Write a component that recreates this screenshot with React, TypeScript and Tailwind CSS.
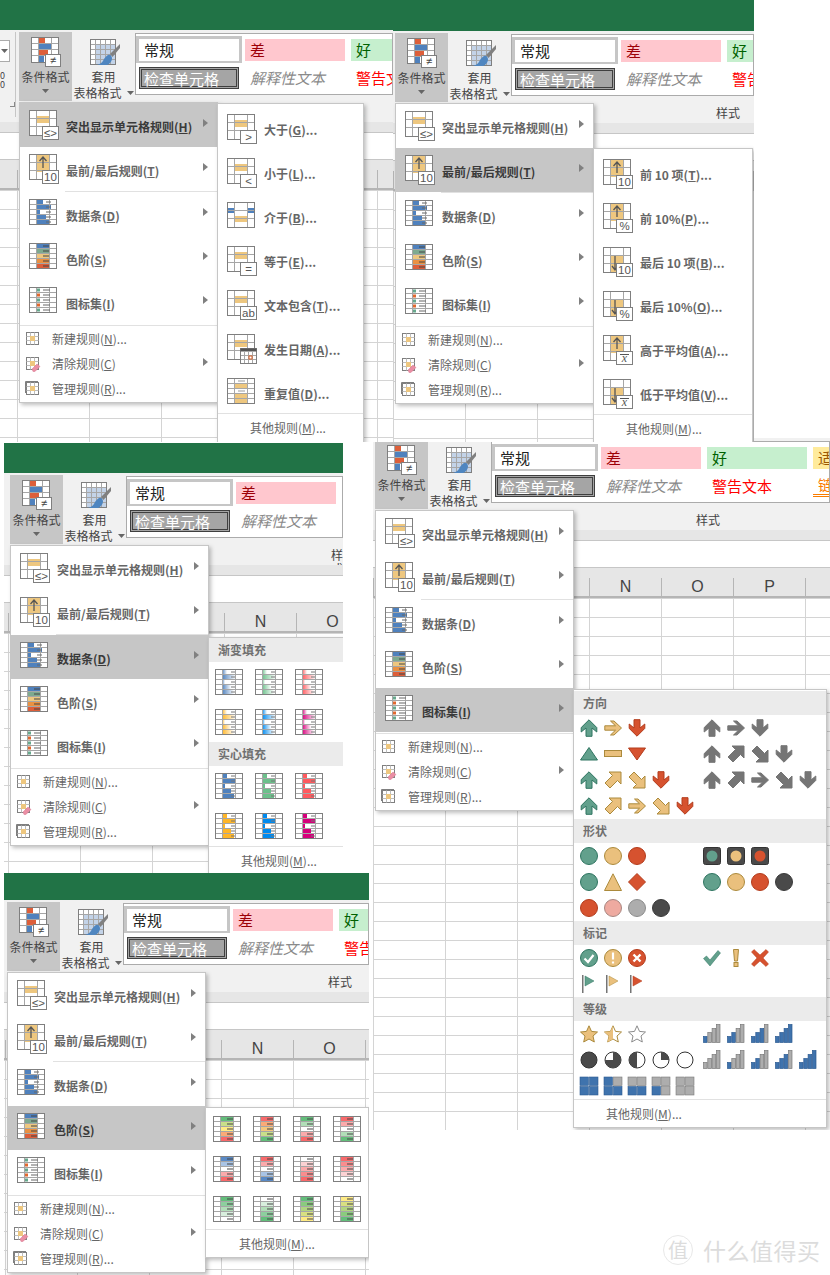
import type { ReactNode } from "react";

const FRAME = "#7f7f7f";
const LINE = "#a6a6a6";
const YEL = "#eec77f";
const BLUE = "#4f81bd";
const RED = "#dd5f3a";
const FONT = "font-['Noto_Sans_CJK_SC','Noto_Sans',sans-serif]";

// ---- sheet icons ----
function Sheet({ w = 31, h = 30, rows = 5, back, over }: { w?: number; h?: number; rows?: 3 | 5; back?: ReactNode; over?: ReactNode }) {
    const ys = rows === 3 ? [8.5, 16.5] : [5.5, 10.5, 15.5, 20.5];
    return (
        <svg width={w} height={h} viewBox={`0 0 ${w} ${h}`} className="shrink-0">
            <rect x="0.5" y="0.5" width="27" height="25" fill="#fff" />
            {back}
            {ys.map((y) => <line key={y} x1="1" x2="27" y1={y} y2={y} stroke={LINE} />)}
            <line x1="7.5" x2="7.5" y1="1" y2="25" stroke={LINE} />
            <line x1="20.5" x2="20.5" y1="1" y2="25" stroke={LINE} />
            <rect x="0.5" y="0.5" width="27" height="25" fill="none" stroke={FRAME} />
            {over}
        </svg>
    );
}

function Badge({ label, italic }: { label: string; italic?: boolean }) {
    return (
        <g>
            <rect x="13.5" y="16.5" width="16" height="13" fill="#fff" stroke={FRAME} />
            <text x="21.5" y="27" textAnchor="middle" fontSize={italic ? 12 : 11.5} fontStyle={italic ? "italic" : "normal"} fontFamily={italic ? "Liberation Serif" : "Liberation Sans"} fill="#555">{label}</text>
            {italic ? <line x1="17" x2="26" y1="19.5" y2="19.5" stroke="#555" /> : null}
        </g>
    );
}

const midBar = <rect x="8" y="6" width="12" height="7" fill={YEL} />;

function TopIcon({ label, italic }: { label: string; italic?: boolean }) {
    return <Sheet rows={3} back={<rect x="8" y="1" width="12" height="17" fill={YEL} />}
        over={<><path d="M14 14V3M10.5 7L14 3l3.500 4" fill="none" stroke="#555" strokeWidth="1.300" /><Badge label={label} italic={italic} /></>} />;
}

function BottomIcon({ label, italic }: { label: string; italic?: boolean }) {
    return <Sheet rows={3} back={<rect x="8" y="9" width="12" height="16" fill={YEL} />}
        over={<><path d="M12 9V23M9 19l3 4 3-4" fill="none" stroke="#555" strokeWidth="1.300" /><Badge label={label} italic={italic} /></>} />;
}

function BarsIcon() {
    const ws = [6, 14, 3, 9, 13];
    return <Sheet rows={5}
        back={ws.map((w, i) => <rect key={i} x="8" y={1 + i * 5} width={w} height="4" fill={BLUE} />)}
        over={[0, 1, 2, 3, 4].map((i) => <line key={i} x1="17" x2="22" y1={3 + i * 5} y2={3 + i * 5} stroke="#666" />)} />;
}

function ScaleIcon() {
    const cs = [BLUE, "#7eaa8f", YEL, "#ea9142", RED];
    return <Sheet rows={5}
        back={cs.map((c, i) => <rect key={c} x="8" y={1 + i * 5} width="12" height="4" fill={c} />)}
        over={[0, 1, 2, 3, 4].map((i) => <line key={i} x1="14" x2="20" y1={3 + i * 5} y2={3 + i * 5} stroke="#444" />)} />;
}

function SetIcon() {
    const cs = ["#66a88c", "#e0682f", "#66a88c", "#e0682f", "#66a88c"];
    return <Sheet rows={5}
        over={cs.map((c, i) => <g key={i}><rect x="8" y={1.5 + i * 5} width="3" height="3" fill={c} /><line x1="14" x2="21" y1={3 + i * 5} y2={3 + i * 5} stroke="#666" /></g>)} />;
}

function SmallIcon({ kind }: { kind: "new" | "clear" | "manage" }) {
    return (
        <svg width="16" height="16" viewBox="0 0 16 16" className="shrink-0">
            {kind === "manage" ? <path d="M0.500 12V0.500H13" fill="none" stroke={FRAME} /> : null}
            <rect x="1.500" y="1.500" width="12" height="12" fill="#fff" stroke={FRAME} />
            <path d="M1.500 5.500H13.500M1.500 9.500H13.500M5.500 1.500V13.500M9.500 1.500V13.500" stroke="#bdbdbd" />
            <rect x="5" y="5" width="5" height="5" fill={YEL} />
            {kind === "clear" ? <path d="M7 13l5-5 3 2.500-5 5H8z" fill="#ea8ea4" stroke="#d97a92" strokeWidth="0.500" /> : null}
        </svg>
    );
}

function CondFormatIcon() {
    return (
        <svg width="31" height="30" viewBox="0 0 31 30">
            <rect x="0.500" y="0.500" width="27" height="25" fill="#fff" />
            <rect x="8" y="1" width="6" height="5" fill={RED} />
            <rect x="8" y="7" width="12" height="5" fill={BLUE} />
            <rect x="8" y="13" width="9" height="5" fill={RED} />
            <rect x="8" y="19" width="5" height="6" fill={BLUE} />
            <path d="M1 6.500H27M1 12.500H27M1 18.500H27M7.500 1V25M20.500 1V25" stroke={LINE} />
            <rect x="0.500" y="0.500" width="27" height="25" fill="none" stroke={FRAME} />
            <rect x="14.500" y="17.500" width="15" height="12" fill="#fff" stroke={FRAME} />
            <text x="22" y="27" textAnchor="middle" fontSize="11" fontFamily="Liberation Sans" fill="#444">≠</text>
        </svg>
    );
}

function TableStyleIcon() {
    return (
        <svg width="31" height="30" viewBox="0 0 31 30">
            <rect x="0.500" y="0.500" width="25" height="25" fill="#fff" />
            <rect x="6" y="6" width="19" height="19" fill="#c3d3e8" />
            <path d="M1 5.500H25M1 10.500H25M1 15.500H25M1 20.500H25M5.500 1V25M10.500 1V25M15.500 1V25M20.500 1V25" stroke={LINE} />
            <rect x="0.500" y="0.500" width="25" height="25" fill="none" stroke={FRAME} />
            <path d="M30 5L20 15l2.500 3L30 9z" fill="#808080" />
            <path d="M18 16c2-1 4 1 4 3.500 0 3-3 6-5 6.500H7c3-1 5-2 6.500-5 1-2 2.500-4 4.500-5z" fill="#4f86c0" />
        </svg>
    );
}

// ---- sub menu sheets ----
function DataBarIcon({ color, gradient }: { color: string; gradient?: boolean }) {
    const ws = [5, 14, 3, 9, 12];
    const id = `bar${color.slice(1)}`;
    return <Sheet w={28} h={26} rows={5}
        back={<>
            <defs><linearGradient id={id}><stop offset="0" stopColor={color} /><stop offset="1" stopColor="#fff" /></linearGradient></defs>
            {ws.map((w, i) => <rect key={i} x="7" y={1 + i * 5} width={w} height="4" fill={gradient ? `url(#${id})` : color} />)}
        </>}
        over={[0, 1, 2, 3, 4].map((i) => <line key={i} x1="16" x2="20" y1={3 + i * 5} y2={3 + i * 5} stroke="#777" />)} />;
}

function ScaleSheet({ colors }: { colors: string[] }) {
    return <Sheet w={28} h={26} rows={5}
        back={colors.map((c, i) => <rect key={i} x="7" y={1 + i * 5} width="14" height="4" fill={c} />)}
        over={colors.map((_, i) => <line key={i} x1="14" x2="20" y1={3 + i * 5} y2={3 + i * 5} stroke="#444" />)} />;
}

const G = "#63be7b", R = "#f8696b", W = "#ffffff", Y = "#ffeb84", B = "#5a8ac6";
const scales: string[][] = [
    [G, "#c9df8a", Y, "#fbaa77", R],
    [R, "#fbaa77", "#f5c77e", "#c9df8a", G],
    [G, "#b1deb8", W, "#fbaaab", R],
    [R, "#fbaaab", W, "#b1deb8", G],
    [B, "#a9c4e5", W, "#fbaaab", R],
    [R, "#fbaaab", W, "#a9c4e5", B],
    [W, "#fbd2d3", "#fbaaab", "#f98d8e", R],
    [R, "#f98d8e", "#fbaaab", "#fbd2d3", W],
    [G, "#8dcf9e", "#b1deb8", "#d8eedd", W],
    [W, "#d8eedd", "#b1deb8", "#8dcf9e", G],
    [G, "#8acb7e", "#b1d580", "#d8e082", Y],
    [Y, "#d8e082", "#b1d580", "#8acb7e", G],
];

// ---- icon sets ----
const C: Record<string, [string, string]> = {
    g: ["#62a08c", "#2f7561"],
    y: ["#eac07d", "#ab8a3c"],
    r: ["#d6522f", "#b33c1c"],
    k: ["#757575", "#757575"],
};

function Box({ children }: { children: ReactNode }) {
    return <svg width="18" height="18" viewBox="0 0 18 18" className="shrink-0 overflow-visible">{children}</svg>;
}

function arrow(deg: number, c: string) {
    let d = "M9 .8L16.800 8.600V13L12 9V17.300H6V9L1.200 13V8.600Z";
    let rot = deg;
    if (deg === 90) {
        d = "M17.500 9L10 2H6.500L11.500 6.800H.8V11.200H11.500L6.500 16H10Z";
        rot = 0;
    } else if (deg === 45 || deg === 135) {
        d = "M17 1H5L8.500 4.500 1 12 6 17 13.500 9.500 17 13Z";
        rot = deg - 45;
    }
    return (
        <Box>
            <path transform={`rotate(${rot} 9 9)`} d={d} fill={C[c][0]} stroke={C[c][1]} />
        </Box>
    );
}

function circle(c: string) {
    return <Box><circle cx="9" cy="9" r="8.500" fill={C[c][0]} stroke={C[c][1]} /></Box>;
}

function rawCircle(fill: string, stroke: string) {
    return <Box><circle cx="9" cy="9" r="8.500" fill={fill} stroke={stroke} /></Box>;
}

function light(c: string) {
    return <Box><rect x="0.500" y="0.500" width="17" height="17" rx="2" fill="#4a4a4a" stroke="#333" /><circle cx="9" cy="9" r="5.500" fill={C[c][0]} /></Box>;
}

function flag(c: string) {
    return <Box><rect x="2" y="0" width="1.500" height="18" fill="#757575" /><path d="M5 1l9 5-9 5z" fill={C[c][0]} stroke={C[c][1]} strokeWidth="0.500" /></Box>;
}

const STAR = "9,.8 11.500,6.400 17.500,7 13,11 14.300,17 9,14 3.700,17 5,11 .5,7 6.500,6.400";

function star(kind: "full" | "half" | "none") {
    return (
        <Box>
            <polygon points={STAR} fill={kind === "full" ? "#eac07d" : "#fff"} stroke={kind === "none" ? "#8c8c8c" : "#ab8a3c"} />
            {kind === "half" ? <polygon points="9,.8 9,14 3.700,17 5,11 .5,7 6.500,6.400" fill="#eac07d" /> : null}
        </Box>
    );
}

function harvey(d: string | null, full?: boolean) {
    return (
        <Box>
            <circle cx="9" cy="9" r="8" fill={full ? "#4a4a4a" : "#fff"} stroke="#333" />
            {d ? <path d={d} fill="#4a4a4a" /> : null}
        </Box>
    );
}

function signal(n: number) {
    const hs = [6, 10, 14, 18];
    return (
        <Box>
            {hs.map((h, i) => <rect key={h} x={0.5 + i * 4.300} y={17.500 - h} width="3.600" height={h} fill={i < n ? "#3f73ad" : "#adadad"} stroke={i < n ? "#2c5a91" : "#7a7a7a"} strokeWidth="0.700" />)}
        </Box>
    );
}

function quad(on: boolean[]) {
    const pos = [[0, 0], [9.500, 0], [0, 9.500], [9.500, 9.500]];
    return (
        <Box>
            {pos.map(([x, y], i) => <rect key={i} x={x} y={y} width="8.500" height="8.500" fill={on[i] ? "#3f73ad" : "#adadad"} stroke={on[i] ? "#2c5a91" : "#7a7a7a"} strokeWidth="0.600" />)}
        </Box>
    );
}

const iconRows: { title: string; rows: [ReactNode[], ReactNode[]][] }[] = [
    {
        title: "方向",
        rows: [
            [[arrow(0, "g"), arrow(90, "y"), arrow(180, "r")], [arrow(0, "k"), arrow(90, "k"), arrow(180, "k")]],
            [[
                <Box><path d="M9 2.500L17.500 15H.5z" fill={C.g[0]} stroke={C.g[1]} /></Box>,
                <Box><rect x="0.500" y="5.500" width="17" height="6" fill={C.y[0]} stroke={C.y[1]} /></Box>,
                <Box><path d="M.5 3H17.500L9 15z" fill={C.r[0]} stroke={C.r[1]} /></Box>,
            ], [arrow(0, "k"), arrow(45, "k"), arrow(135, "k"), arrow(180, "k")]],
            [[arrow(0, "g"), arrow(45, "y"), arrow(135, "y"), arrow(180, "r")], [arrow(0, "k"), arrow(45, "k"), arrow(90, "k"), arrow(135, "k"), arrow(180, "k")]],
            [[arrow(0, "g"), arrow(45, "y"), arrow(90, "y"), arrow(135, "y"), arrow(180, "r")], []],
        ],
    },
    {
        title: "形状",
        rows: [
            [[circle("g"), circle("y"), circle("r")], [light("g"), light("y"), light("r")]],
            [[
                circle("g"),
                <Box><path d="M9 .8L17.500 17.500H.5z" fill={C.y[0]} stroke={C.y[1]} /></Box>,
                <Box><path d="M9 .5L17.500 9 9 17.500.5 9z" fill={C.r[0]} stroke={C.r[1]} strokeLinejoin="round" /></Box>,
            ], [circle("g"), circle("y"), circle("r"), rawCircle("#4a4a4a", "#3a3a3a")]],
            [[circle("r"), rawCircle("#eeaaa0", "#a88680"), rawCircle("#adadad", "#8c8c8c"), rawCircle("#4a4a4a", "#3a3a3a")], []],
        ],
    },
    {
        title: "标记",
        rows: [
            [[
                <Box><circle cx="9" cy="9" r="8.500" fill={C.g[0]} stroke={C.g[1]} /><path d="M4.500 9.500L8 13l5.500-7" fill="none" stroke="#fff" strokeWidth="2.200" /></Box>,
                <Box><circle cx="9" cy="9" r="8.500" fill={C.y[0]} stroke={C.y[1]} /><path d="M9 3.500V10.500M9 12.500V14.500" fill="none" stroke="#fff" strokeWidth="2.200" /></Box>,
                <Box><circle cx="9" cy="9" r="8.500" fill={C.r[0]} stroke={C.r[1]} /><path d="M5.500 5.500L12.500 12.500M12.500 5.500L5.500 12.500" fill="none" stroke="#fff" strokeWidth="2.400" /></Box>,
            ], [
                <Box><path d="M.5 9.500L3.500 7 7 11 15 1.500 17.500 4 7 17z" fill={C.g[0]} stroke={C.g[1]} strokeWidth="0.500" /></Box>,
                <Box><path d="M6.500 .5H11.500L10.500 12H7.500z" fill={C.y[0]} stroke={C.y[1]} /><rect x="7" y="13.500" width="4" height="4" fill={C.y[0]} stroke={C.y[1]} /></Box>,
                <Box><path d="M3 .5L9 6 15 .5 17.500 3 12 9 17.500 15 15 17.500 9 12 3 17.500.5 15 6 9 .5 3z" fill={C.r[0]} stroke={C.r[1]} strokeWidth="0.500" /></Box>,
            ]],
            [[flag("g"), flag("y"), flag("r")], []],
        ],
    },
    {
        title: "等级",
        rows: [
            [[star("full"), star("half"), star("none")], [signal(1), signal(2), signal(3), signal(4)]],
            [[
                harvey(null, true),
                harvey("M9 9V1A8 8 0 1 1 1 9z"),
                harvey("M9 1A8 8 0 0 0 9 17z"),
                harvey("M9 9V1A8 8 0 0 1 17 9z"),
                harvey(null),
            ], [signal(0), signal(1), signal(2), signal(3), signal(4)]],
            [[
                quad([true, true, true, true]),
                quad([true, false, true, true]),
                quad([false, false, true, true]),
                quad([false, false, true, false]),
                quad([false, false, false, false]),
            ], []],
        ],
    },
];

// ---- menu parts ----
function Label({ text, k, more, strong }: { text: string; k: string; more?: boolean; strong?: boolean }) {
    return (
        <span className={`text-[12px] leading-none whitespace-nowrap ${strong ? "font-bold" : "font-normal"}`}>
            {text}(<u>{k}</u>){more ? "..." : ""}
        </span>
    );
}

function Caret() {
    return (
        <svg width="5" height="8" viewBox="0 0 5 8" className="ml-auto mr-[9px] shrink-0 -translate-y-[2px]">
            <path d="M0 0l5 4-5 4z" fill="#808080" />
        </svg>
    );
}

const mainRows = [
    { text: "突出显示单元格规则", k: "H", icon: <Sheet rows={3} back={midBar} over={<Badge label="≤>" />} /> },
    { text: "最前/最后规则", k: "T", icon: <TopIcon label="10" /> },
    { text: "数据条", k: "D", icon: <BarsIcon /> },
    { text: "色阶", k: "S", icon: <ScaleIcon /> },
    { text: "图标集", k: "I", icon: <SetIcon /> },
];

function SubRows({ rows }: { rows: { text: string; k: string; icon: ReactNode }[] }) {
    return (
        <div className="pt-[4px]">
            {rows.map((r, i) => (
                <div key={r.text} className={`flex items-start pl-[9px] gap-[6px] text-[#666] ${i === rows.length - 1 ? "h-[41px]" : "h-[44px]"}`}>
                    <div className="pt-[6px]">{r.icon}</div>
                    <div className="pt-[13px]"><Label text={r.text} k={r.k} more strong /></div>
                </div>
            ))}
        </div>
    );
}

function More({ pad, h }: { pad: string; h: string }) {
    return (
        <div className="border-t border-[#e1e1e1]">
            <div className={`flex items-center text-[#666] ${pad} ${h}`}>
                <Label text="其他规则" k="M" more />
            </div>
        </div>
    );
}

const highlightSub = (
    <>
        <SubRows rows={[
            { text: "大于", k: "G", icon: <Sheet rows={3} back={midBar} over={<Badge label=">" />} /> },
            { text: "小于", k: "L", icon: <Sheet rows={3} back={midBar} over={<Badge label="<" />} /> },
            {
                text: "介于", k: "B", icon: <Sheet rows={3} back={<><rect x="1" y="6" width="6" height="5" fill={BLUE} /><rect x="21" y="6" width="6" height="5" fill={BLUE} /><rect x="8" y="14" width="12" height="6" fill={YEL} /></>} />,
            },
            { text: "等于", k: "E", icon: <Sheet rows={3} back={midBar} over={<Badge label="=" />} /> },
            { text: "文本包含", k: "T", icon: <Sheet rows={3} back={midBar} over={<Badge label="ab" />} /> },
            {
                text: "发生日期", k: "A", icon: <Sheet rows={3} back={midBar} over={<g>
                    <rect x="13.500" y="14.500" width="16" height="15" fill="#fff" stroke={FRAME} />
                    <rect x="13.500" y="14.500" width="16" height="3" fill="#555" />
                    <path d="M14 21.500H29M14 25.500H29M17.500 18V29M21.500 18V29M25.500 18V29" stroke={LINE} />
                    <rect x="22" y="22" width="3" height="3" fill="none" stroke="#d9622b" />
                </g>} />,
            },
            { text: "重复值", k: "D", icon: <Sheet rows={5} back={<><rect x="8" y="6" width="12" height="4" fill={YEL} /><rect x="8" y="16" width="12" height="9" fill={YEL} /></>} over={[0, 2].map((i) => <line key={i} x1="11" x2="18" y1={3 + i * 5} y2={3 + i * 5} stroke="#999" />)} /> },
        ]} />
        <More pad="pl-[32px]" h="h-[28px]" />
    </>
);

const topSub = (
    <>
        <SubRows rows={[
            { text: "前 10 项", k: "T", icon: <TopIcon label="10" /> },
            { text: "前 10%", k: "P", icon: <TopIcon label="%" /> },
            { text: "最后 10 项", k: "B", icon: <BottomIcon label="10" /> },
            { text: "最后 10%", k: "O", icon: <BottomIcon label="%" /> },
            { text: "高于平均值", k: "A", icon: <TopIcon label="x" italic /> },
            { text: "低于平均值", k: "V", icon: <BottomIcon label="x" italic /> },
        ]} />
        <More pad="pl-[32px]" h="h-[28px]" />
    </>
);

function SubHeading({ title }: { title: string }) {
    return <div className="flex h-[24px] items-center bg-[#ebebeb] pl-[9px] text-[12px] font-bold text-[#707070]">{title}</div>;
}

function BarGroup({ gradient }: { gradient?: boolean }) {
    const top = ["#4f81bd", "#6cc08b", "#ff5a5f"];
    const bottom = ["#ffb628", "#008aef", "#d6007b"];
    return (
        <div className="grid grid-cols-[repeat(3,28px)] gap-x-[12px] gap-y-[14px] pl-[6px] pt-[7px] pb-[7px]">
            {[...top, ...bottom].map((c) => <DataBarIcon key={c} color={c} gradient={gradient} />)}
        </div>
    );
}

const barsSub = (
    <>
        <SubHeading title="渐变填充" />
        <BarGroup gradient />
        <SubHeading title="实心填充" />
        <BarGroup />
        <More pad="pl-[32px]" h="h-[28px]" />
    </>
);

const scaleSub = (
    <>
        <div className="grid grid-cols-[repeat(4,28px)] gap-x-[12px] gap-y-[14px] pl-[7px] pt-[8px] pb-[7px]">
            {scales.map((s, i) => <ScaleSheet key={i} colors={s} />)}
        </div>
        <More pad="pl-[33px]" h="h-[27px]" />
    </>
);

const iconsSub = (
    <div className="pt-[1px]">
        {iconRows.map((sec) => (
            <div key={sec.title}>
                <SubHeading title={sec.title} />
                {sec.rows.map((row, i) => (
                    <div key={i} className="flex h-[26px] items-center pl-[6px]">
                        {row.map((group, j) => (
                            <div key={j} className="flex w-[126px] gap-[6px]">
                                {group.map((icon, n) => <span key={n} className="flex">{icon}</span>)}
                            </div>
                        ))}
                    </div>
                ))}
            </div>
        ))}
        <More pad="pl-[32px]" h="h-[27px]" />
    </div>
);

function Menu({ active, sub, subClass }: { active: number; sub: ReactNode; subClass: string }) {
    const shell = "absolute z-10 border border-[#c6c6c6] bg-white shadow-[2px_2px_4px_rgba(0,0,0,0.25)]";
    return (
        <>
            <div className={`${shell} left-[0px] top-[70px] w-[199px] pb-px`}>
                {mainRows.map((r, i) => (
                    <div key={r.text}>
                        {i === 2 ? <div className="ml-[45px] h-px bg-[#e1e1e1]" /> : null}
                        <div className={`flex h-[44px] items-center pl-[9px] gap-[6px] ${i === active ? "bg-[#c6c6c6] text-[#3a3a3a]" : "text-[#666]"}`}>
                            {r.icon}
                            <span className="flex translate-y-[2px]"><Label text={r.text} k={r.k} strong /></span>
                            <Caret />
                        </div>
                    </div>
                ))}
                <div className="mt-px h-px bg-[#e1e1e1]" />
                {[
                    { text: "新建规则", k: "N", more: true, kind: "new" as const },
                    { text: "清除规则", k: "C", more: false, kind: "clear" as const },
                    { text: "管理规则", k: "R", more: true, kind: "manage" as const },
                ].map((r) => (
                    <div key={r.k} className="flex h-[25px] items-center gap-[11px] pl-[5px] text-[#666]">
                        <SmallIcon kind={r.kind} />
                        <Label text={r.text} k={r.k} more={r.more} />
                        {r.k === "C" ? <Caret /> : null}
                    </div>
                ))}
            </div>
            <div className={`${shell} left-[198px] ${subClass}`}>{sub}</div>
        </>
    );
}

// ---- ribbon + sheet ----
function DownCaret() {
    return <svg width="7" height="4" viewBox="0 0 7 4" className="shrink-0"><path d="M0 0h7L3.500 4z" fill="#666" /></svg>;
}

function Gallery() {
    const cell = "ml-[3px] h-[22px] w-[100px] text-[15px] whitespace-nowrap";
    return (
        <div className="min-w-0 flex-1 pt-px">
            <div className="h-[62px] overflow-hidden border border-[#ababab] bg-white pt-[2px]">
                <div className="grid w-max grid-cols-[repeat(5,106px)]">
                    <div className="h-[27px] w-[106px] border-[3px] border-b-2 border-[#c6c6c6] bg-white pl-[5px] text-[15px] leading-[22px] text-[#222]">常规</div>
                    <div className="pt-[3px]"><div className={`${cell} pl-[5px] leading-[22px] bg-[#ffc7ce] text-[#9c0006]`}>差</div></div>
                    <div className="pt-[3px]"><div className={`${cell} pl-[5px] leading-[22px] bg-[#c6efce] text-[#006100]`}>好</div></div>
                    <div className="pt-[3px]"><div className={`${cell} pl-[5px] leading-[22px] bg-[#ffeb9c] text-[#9c5700]`}>适中</div></div>
                    <div />
                    <div className="pt-[4px]"><div className={`${cell} border-[3px] border-double border-[#3f3f3f] bg-[#a5a5a5] pl-[2px] leading-[17px] text-white`}>检查单元格</div></div>
                    <div className="pt-[4px]"><div className={`${cell} pl-[5px] leading-[22px] italic text-[#8a8a8a]`}>解释性文本</div></div>
                    <div className="pt-[4px]"><div className={`${cell} pl-[5px] leading-[22px] text-[#ff0000]`}>警告文本</div></div>
                    <div className="pt-[4px]"><div className={`${cell} pl-[5px] leading-[20px] border-b-[3px] border-double border-[#fa7d00] text-[#fa7d00]`}>链接单元格</div></div>
                    <div />
                </div>
            </div>
            <div className="pl-[205px] pt-[10px] text-[12px] leading-[14px] text-[#444]">样式</div>
        </div>
    );
}

function Shot({ box, green, left, lead, headerPad, gridPos, menu }: { box: string; green: string; left: string; lead?: ReactNode; headerPad: string; gridPos: string; menu: ReactNode }) {
    const cols = ["K", "L", "M", "N", "O", "P", "Q"];
    return (
        <section className={`absolute flex flex-col overflow-hidden bg-white ${box}`}>
            <div className={`shrink-0 bg-[#217346] ${green}`} />
            <div className={`flex h-[92px] shrink-0 bg-[#f1f1f1] pt-[2px] text-[12px] text-[#444] ${left}`}>
                {lead}
                <div className="relative h-[69px] w-[53px] shrink-0 bg-[#c6c6c6]">
                    <div className="flex flex-col items-center pt-[5px] pl-[2px]">
                        <CondFormatIcon />
                    </div>
                    <div className="text-center leading-[20px]">条件格式</div>
                    <div className="flex justify-center pt-[2px]"><DownCaret /></div>
                    {menu}
                </div>
                <div className="w-[63px] shrink-0">
                    <div className="flex justify-center pt-[7px] pl-[3px]"><TableStyleIcon /></div>
                    <div className="-mt-[2px] text-center leading-[20px]">套用</div>
                    <div className="flex items-center justify-center gap-[5px] leading-[12px]">表格格式<DownCaret /></div>
                </div>
                <Gallery />
            </div>
            <div className="h-[11px] shrink-0 border-b border-[#c6c6c6] bg-[#e6e6e6]" />
            <div className="h-[27px] shrink-0 border-b border-[#c6c6c6] bg-white" />
            <div className={`flex h-[30px] shrink-0 border-b-2 border-[#b5b5b5] bg-[#e6e6e6] ${headerPad}`}>
                {cols.map((c) => (
                    <div key={c} className="mt-[10px] flex h-[18px] w-[72px] shrink-0 items-center justify-center border-l border-[#b5b5b5] text-[16px] text-[#444] font-['Liberation_Sans',sans-serif]">{c}</div>
                ))}
            </div>
            <div className={`min-h-0 flex-1 bg-[linear-gradient(to_right,#d4d4d4_1px,transparent_1px),linear-gradient(to_bottom,#d4d4d4_1px,transparent_1px)] bg-[size:72px_19px] ${gridPos}`} />
        </section>
    );
}

function LeftStub() {
    return (
        <div className="mr-[3px] flex h-[85px] w-[16px] shrink-0 flex-col border-r border-[#c6c6c6]">
            <div className="mt-[8px] flex h-[22px] w-[10px] items-center justify-end border border-l-0 border-[#ababab] bg-white pr-px">
                <DownCaret />
            </div>
            <div className="mt-[9px] text-[9px] leading-[9px] text-[#444]">0<br />0</div>
            <div className="ml-[10px] mt-[13px] h-[5px] w-[5px] border-b border-r border-[#888]" />
        </div>
    );
}

export default function App() {
    return (
        <div className={`relative h-[1275px] w-[830px] overflow-hidden bg-white ${FONT}`}>
            <Shot box="left-[373px] top-[438px] h-[692px] w-[457px]" green="h-0" left="pl-[2px]" headerPad="pl-0" gridPos="bg-[position:0_0]"
                menu={<Menu active={4} sub={iconsSub} subClass="top-[249px] w-[254px]" />} />
            <Shot box="left-0 top-0 h-[442px] w-[393px]" green="h-[30px]" left="" lead={<LeftStub />} headerPad="pl-[17px]" gridPos="bg-[position:17px_0]"
                menu={<Menu active={0} sub={highlightSub} subClass="top-[71px] w-[147px]" />} />
            <Shot box="left-[393px] top-0 h-[442px] w-[361px]" green="h-[31px]" left="pl-[2px]" headerPad="pl-0" gridPos="bg-[position:0_0]"
                menu={<Menu active={1} sub={topSub} subClass="top-[115px] w-[160px]" />} />
            <Shot box="left-[4px] top-[443px] h-[430px] w-[339px]" green="h-[30px]" left="pl-[6px]" headerPad="pl-[4px]" gridPos="bg-[position:4px_0]"
                menu={<Menu active={2} sub={barsSub} subClass="top-[162px] w-[140px]" />} />
            <Shot box="left-[4px] top-[873px] h-[402px] w-[365px]" green="h-[27px]" left="pl-[3px]" headerPad="pl-px" gridPos="bg-[position:1px_0]"
                menu={<Menu active={3} sub={scaleSub} subClass="top-[205px] w-[164px]" />} />
            <div className="absolute left-[663px] top-[1235px] flex items-center gap-[10px] text-[#dcdcdc]">
                <div className="flex h-[30px] w-[30px] items-center justify-center rounded-full border border-[#e8e8e8] text-[20px] leading-none">值</div>
                <div className="text-[23px] leading-[30px] tracking-[0.5px]">什么值得买</div>
            </div>
        </div>
    );
}
